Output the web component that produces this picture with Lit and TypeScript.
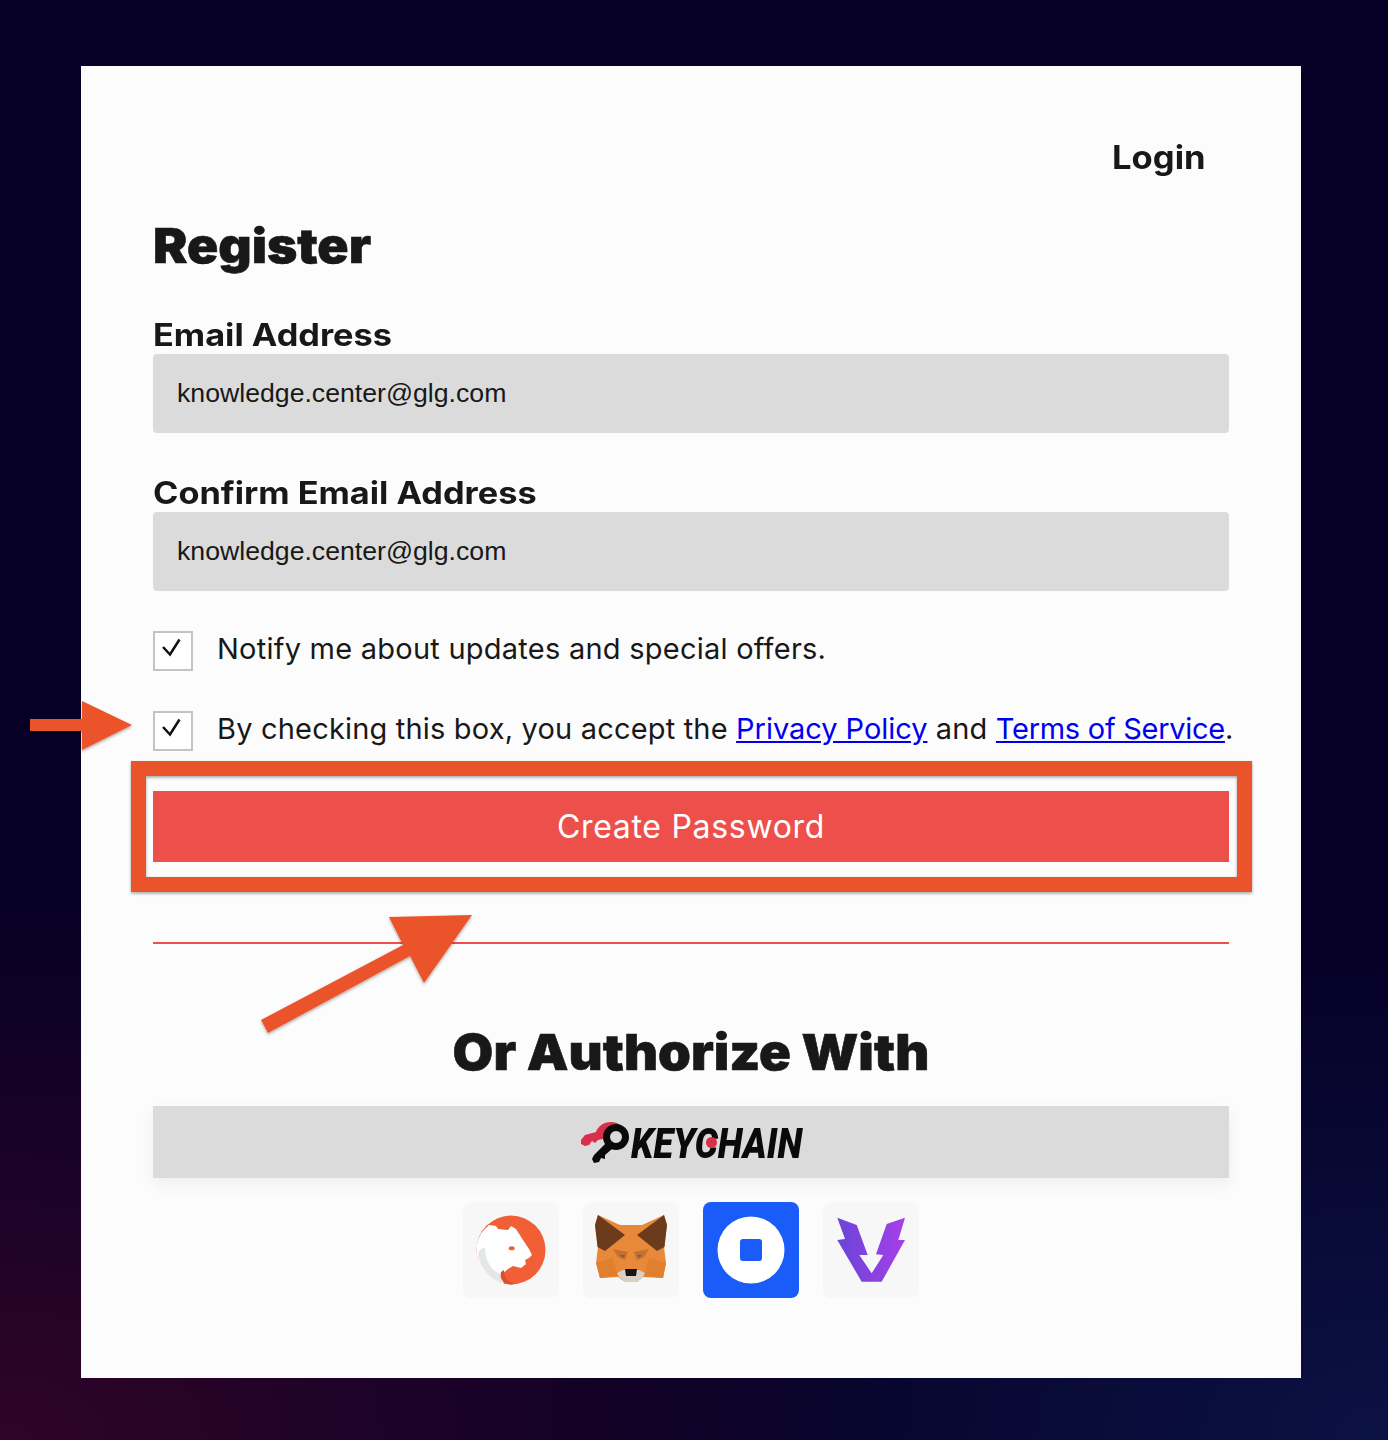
import { LitElement, html, css, svg } from "lit";
import { customElement } from "lit/decorators.js";

const check = html`<svg class="tick" viewBox="0 0 40 40"><path d="M10 16 L17 23.500 L26.500 8.500" fill="none" stroke="#111" stroke-width="2.500"/></svg>`;

const arrows = svg`
  <defs>
    <filter id="sh" x="-10%" y="-10%" width="120%" height="130%">
      <feDropShadow dx="0" dy="1.500" stdDeviation="1.500" flood-color="#000" flood-opacity="0.35"/>
    </filter>
  </defs>
  <g fill="#eb532c" filter="url(#sh)">
    <path d="M30 719 H82 V701 L132 725 L82 750 V731 H30 Z"/>
    <path fill-rule="evenodd" d="M131 761 H1252 V892 H131 Z M146 776 V877 H1237 V776 Z"/>
    <path d="M261 1020 L403 945 L389 917 L472 915 L424 983 L410 956 L268 1033 Z"/>
  </g>`;

@customElement("app-root")
export class AppRoot extends LitElement {
  static styles = css`
    :host {
      display: block;
      position: relative;
      width: 1388px;
      height: 1440px;
      box-sizing: border-box;
      padding: 66px 87px 62px 81px;
      background:
        radial-gradient(900px 560px at 0% 100%, #2f0428 0%, rgba(47, 4, 40, 0) 100%),
        radial-gradient(760px 500px at 100% 100%, #0b1244 0%, rgba(11, 18, 68, 0) 100%),
        #060026;
      font-family: Inter, "Open Sans", sans-serif;
      color: #181818;
    }
    .card {
      height: 1312px;
      box-sizing: border-box;
      background: #fcfcfc;
      padding: 74px 72px 0;
      display: flex;
      flex-direction: column;
    }
    .login {
      align-self: flex-end;
      margin-right: 23px;
      height: 36px;
      line-height: 36px;
      font-size: 32px;
      font-weight: 700;
      transform: scaleX(1.08);
      transform-origin: right center;
    }
    h1 {
      margin: 40px 0 0;
      height: 60px;
      line-height: 60px;
      font-size: 48px;
      font-weight: 900;
      transform: scaleX(1.075);
      transform-origin: left center;
      -webkit-text-stroke: 0.6px #181818;
    }
    label {
      display: block;
      height: 38px;
      line-height: 38px;
      font-size: 31px;
      font-weight: 700;
      transform: scaleX(1.107);
      transform-origin: left center;
    }
    .first { margin-top: 40px; }
    .second { margin-top: 41px; }
    .input {
      height: 79px;
      box-sizing: border-box;
      padding: 0 24px;
      display: flex;
      align-items: center;
      background: #dbdbdb;
      border-radius: 4px;
      font-family: "Liberation Sans", Arial, sans-serif;
      font-size: 26.660px;
      color: #181818;
    }
    .check {
      display: flex;
      align-items: center;
      height: 40px;
      gap: 24px;
      font-size: 29px;
      white-space: nowrap;
    }
    .check.a { margin-top: 40px; letter-spacing: 0.240px; }
    .check.b { margin-top: 40px; letter-spacing: 0.180px; }
    .box {
      width: 40px;
      height: 40px;
      box-sizing: border-box;
      border: 2px solid #c4c4c4;
      background: #fff;
      flex: none;
      position: relative;
    }
    .tick { position: absolute; left: -2px; top: -2px; width: 40px; height: 40px; }
    .label-text { position: relative; top: -3px; }
    a { color: #0000ee; text-decoration: underline; letter-spacing: -0.040px; }
    a.terms { letter-spacing: -0.280px; }
    .btn {
      margin-top: 40px;
      height: 71px;
      display: flex;
      align-items: center;
      justify-content: center;
      background: #ed504b;
      color: #fff;
      font-size: 32px;
      letter-spacing: 0.700px;
    }
    hr {
      margin: 80px 0 0;
      border: 0;
      height: 2px;
      background: #ed504b;
    }
    h2 {
      margin: 78px 0 0;
      height: 60px;
      line-height: 60px;
      text-align: center;
      font-size: 50px;
      font-weight: 900;
      transform: scaleX(1.052);
      -webkit-text-stroke: 0.6px #181818;
    }
    .keychain {
      margin-top: 24px;
      height: 72px;
      display: flex;
      align-items: center;
      justify-content: center;
      background: #dbdbdb;
      box-shadow: 0 6px 16px rgba(0, 0, 0, 0.06);
    }
    .kc-logo { width: 52px; height: 44px; flex: none; }
    .kc-word {
      position: relative;
      display: block;
      width: 172px;
      height: 44px;
    }
    .kc-text {
      display: block;
      margin-top: 2px;
      font-family: Roboto, sans-serif;
      font-weight: 900;
      font-style: italic;
      font-size: 42px;
      line-height: 44px;
      color: #0a0a0a;
      white-space: nowrap;
      transform: scaleX(0.863);
      transform-origin: left center;
    }
    .kc-dot {
      position: absolute;
      width: 11px;
      height: 11px;
      border-radius: 50%;
      background: #d9304a;
      left: 75px;
      top: 17px;
    }
    .wallets {
      margin-top: 24px;
      display: flex;
      justify-content: center;
      gap: 24px;
    }
    .wallet {
      width: 96px;
      height: 96px;
      border-radius: 8px;
      background: #f7f7f7;
    }
    .wallet.blue { background: #1a5cfa; }
    .wallet svg { display: block; width: 96px; height: 96px; filter: blur(0.5px); }
    .overlay {
      position: absolute;
      left: 0;
      top: 0;
      width: 1388px;
      height: 1440px;
      pointer-events: none;
    }
  `;

  render() {
    return html`
      <div class="card">
        <div class="login">Login</div>
        <h1>Register</h1>
        <label class="first">Email Address</label>
        <div class="input">knowledge.center@glg.com</div>
        <label class="second">Confirm Email Address</label>
        <div class="input">knowledge.center@glg.com</div>
        <div class="check a"><span class="box">${check}</span><span class="label-text">Notify me about updates and special offers.</span></div>
        <div class="check b"><span class="box">${check}</span><span class="label-text">By checking this box, you accept the <a href="#">Privacy Policy</a> and <a class="terms" href="#">Terms of Service</a>.</span></div>
        <div class="btn">Create Password</div>
        <hr />
        <h2>Or Authorize With</h2>
        <div class="keychain">
          <svg class="kc-logo" viewBox="0 0 52 44">
            <path fill="#d9304a" d="M2 20 L6 15 L17 12 C19 6 25 2 32 2 C36 2 39 3 41 5 L36 5 C30 5 26 9 25 14 L24 19 L19 20 L16 23 L13 21 L10 25 L6 26 L2 24 Z"/>
            <circle cx="37" cy="17" r="9.500" fill="none" stroke="#0a0a0a" stroke-width="7"/>
            <path fill="#0a0a0a" d="M28 22 L33 29 L26 35 L26 39 L22 38 L20 42 L15 43 L13 39 L15 35 Z"/>
          </svg>
          <span class="kc-word"><span class="kc-text">KEYCHAIN</span><span class="kc-dot"></span></span>
        </div>
        <div class="wallets">
          <div class="wallet">
            <svg viewBox="0 0 96 96">
              <circle cx="48" cy="48" r="34.500" fill="#f05f36"/>
              <path fill="#fff" d="M13.500 48 C13.500 38 18 30 24 25 L26 23 L33 24 L35 27 L45 28 L48 24 L53 27 L60 38 L66 47 L69 53 L66 56 L62 58 L63 62 L58 66 L50 64 L45 67 L38 73 L41 82 C25 79 13.500 65 13.500 48 Z"/>
              <path fill="#e3e7e7" d="M15 52 A34.500 34.500 0 0 0 40 81.500 L37 72 C28 68 22 58 22 46 C19 46 16 48 15 52 Z"/>
              <path fill="#d9502c" d="M38 70 C36 78 42 84 52 82 C45 80 41 76 41 68 Z"/>
              <ellipse cx="48.700" cy="46.300" rx="3" ry="2" fill="#f05f36"/>
            </svg>
          </div>
          <div class="wallet">
            <svg viewBox="0 0 96 96">
              <path fill="#e8893a" d="M15 13 L37 23 L59 23 L81 13 L84 23 L81 45 L83 61 L80 76 L60 75 L54 80 L42 80 L35 75 L17 76 L13 61 L15 45 L12 23 Z"/>
              <path fill="#6b3b1b" d="M12 23 L15 13 L42 33 L22 49 L14.500 45 Z"/>
              <path fill="#6b3b1b" d="M84 23 L81 13 L54 33 L74 49 L81.500 45 Z"/>
              <path fill="#e0802f" d="M13 61 L30 56 L35 74 L17 76 Z"/>
              <path fill="#e0802f" d="M83 61 L66 56 L61 74 L80 76 Z"/>
              <path fill="#c86f2f" d="M30 47 L45 50 L42 58 L35 55 Z"/>
              <path fill="#c86f2f" d="M66 47 L51 50 L54 58 L61 55 Z"/>
              <path fill="#56697a" d="M37 53 L42 53 L40 56 Z"/>
              <path fill="#56697a" d="M59 53 L54 53 L56 56 Z"/>
              <path fill="#d8cfc6" d="M34 71 L40 68 H56 L62 71 L60 75 L54 80 H42 L36 75 Z"/>
              <path fill="#161616" d="M42 67 H54 L53 74 H43 Z"/>
            </svg>
          </div>
          <div class="wallet blue">
            <svg viewBox="0 0 96 96">
              <circle cx="48" cy="48" r="33.500" fill="#fff"/>
              <rect x="37" y="37" width="22" height="22" rx="3" fill="#1a5cfa"/>
            </svg>
          </div>
          <div class="wallet">
            <svg viewBox="0 0 96 96">
              <defs>
                <linearGradient id="vg" x1="0" x2="1" y1="0" y2="0">
                  <stop offset="0" stop-color="#6a45d8"/>
                  <stop offset="1" stop-color="#a63fe8"/>
                </linearGradient>
              </defs>
              <path fill="url(#vg)" d="M14.300 15.700 L33.700 23 L44.700 53 L36.300 53 L48.700 71.300 L60.300 53 L53 52.300 L63.700 22 L82 15.700 L75.300 38 L82 38 L58.700 79.700 L38.700 79.700 L14.300 38 L22 37 Z"/>
            </svg>
          </div>
        </div>
      </div>
      <svg class="overlay" viewBox="0 0 1388 1440">${arrows}</svg>
    `;
  }
}
